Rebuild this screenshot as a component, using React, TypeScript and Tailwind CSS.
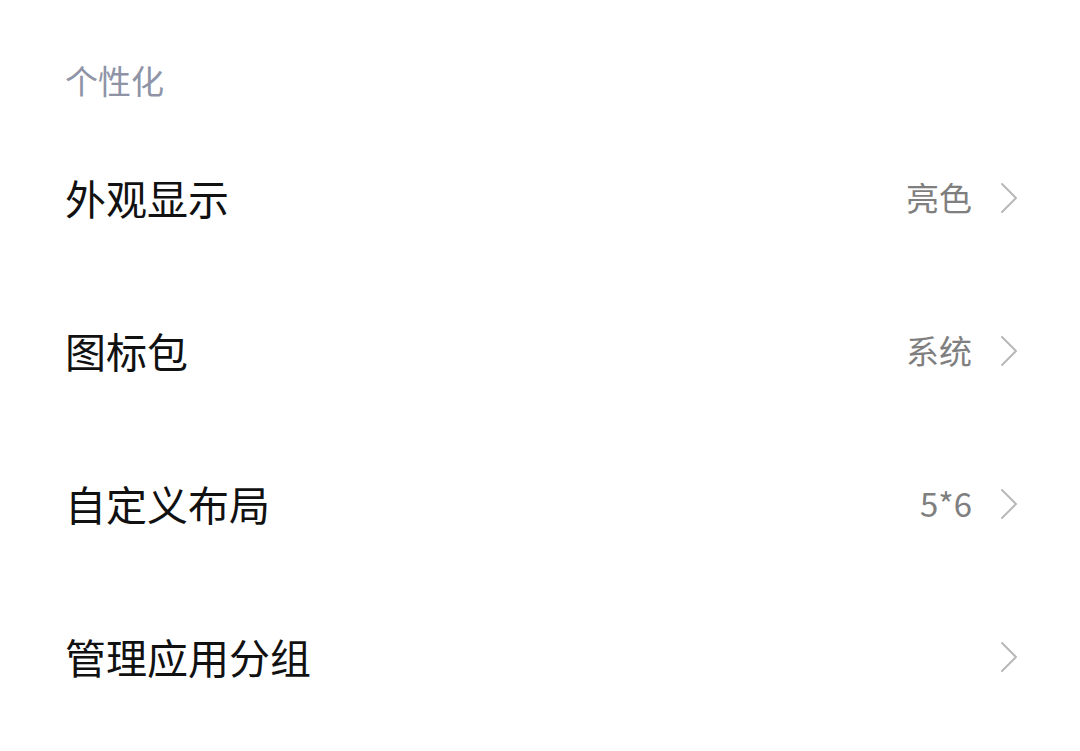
const rows = [
  { label: "外观显示", value: "亮色" },
  { label: "图标包", value: "系统" },
  { label: "自定义布局", value: "5*6" },
  { label: "管理应用分组", value: "" },
];

function Chevron() {
  return (
    <svg width="18" height="32" viewBox="0 0 18 32" fill="none" className="shrink-0">
      <polyline points="2,2 16,16 2,30" stroke="#b8b8b8" strokeWidth="2" strokeLinecap="round" strokeLinejoin="round" />
    </svg>
  );
}

export default function App() {
  return (
    <div
      className="w-[1080px] h-[751px] bg-white overflow-hidden pl-[65px] pr-[62px]"
      style={{ fontFamily: '"Noto Sans CJK SC", "Noto Sans", sans-serif' }}
    >
      {/* Section header */}
      <div className="h-[121px] pt-[58px]">
        <span className="text-[33px] leading-[44px] text-[#8e93a6]">个性化</span>
      </div>

      {rows.map((r) => (
        <div key={r.label} className="h-[153px] flex items-center justify-between">
          <span className="text-[41px] leading-none text-[#111111]">{r.label}</span>
          <div className="flex items-center gap-[28px]">
            {r.value && (
              <span className="text-[33px] leading-none text-[#7f7f7f]">{r.value}</span>
            )}
            <Chevron />
          </div>
        </div>
      ))}
    </div>
  );
}
